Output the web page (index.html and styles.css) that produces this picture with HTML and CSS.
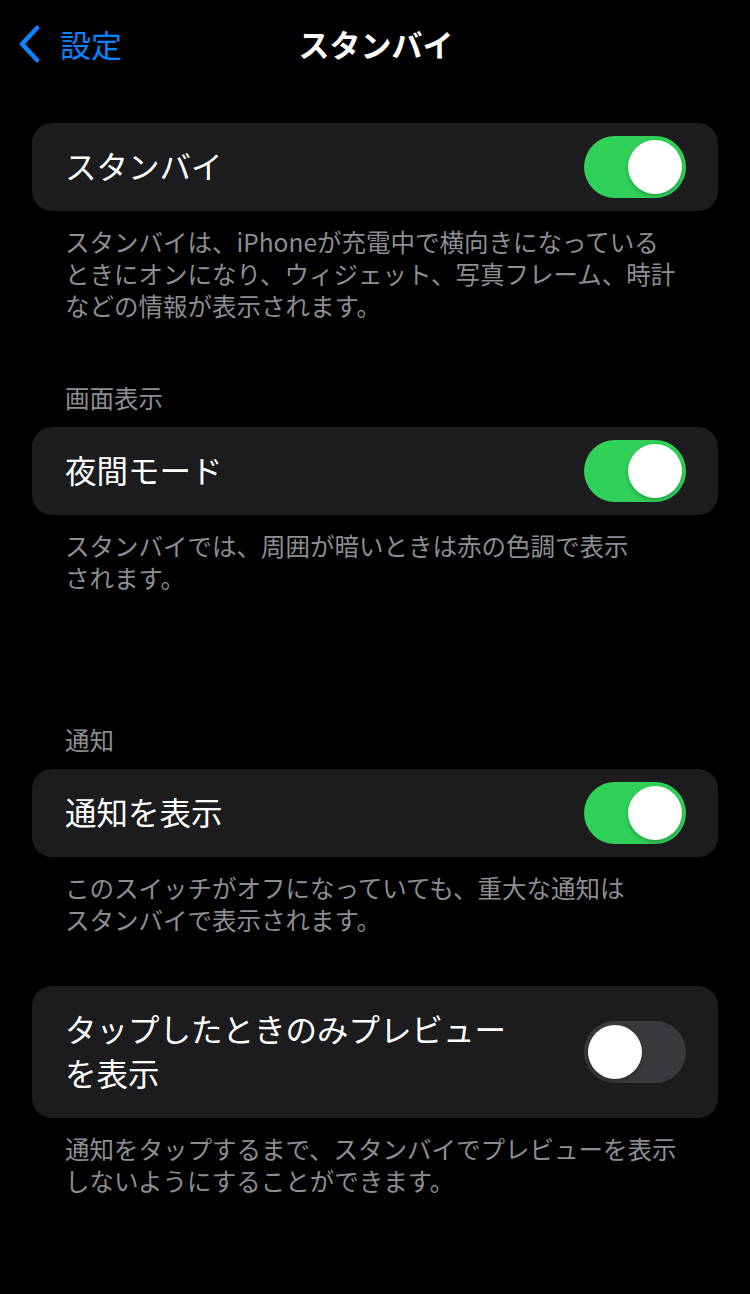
FILE: index.html
```html
<!DOCTYPE html>
<html lang="ja">

<head>
  <meta charset="UTF-8" />
  <meta name="viewport" content="width=device-width, initial-scale=1.0" />
  <title>スタンバイ</title>

  <link rel="stylesheet" href="styles.css">
</head>

<body>
  <div id="app">
    <header class="nav">
      <a class="nav-back" href="#">
        <svg class="chevron" width="24" height="38" viewBox="0 0 24 38">
          <path d="M19 3 L4 19 L19 35" fill="none" stroke="#0a84ff" stroke-width="4.5" stroke-linecap="round" stroke-linejoin="round" />
        </svg>
        <span>設定</span>
      </a>
      <h1 class="nav-title">スタンバイ</h1>
      <div></div>
    </header>

    <main class="list">
      <section class="group">
        <div class="card">
          <div class="row">
            <span class="label">スタンバイ</span>
            <span class="switch on"><span class="knob"></span></span>
          </div>
        </div>
        <p class="note">スタンバイは、iPhoneが充電中で横向きになっている<br>ときにオンになり、ウィジェット、写真フレーム、時計<br>などの情報が表示されます。</p>
      </section>

      <section class="group gap-md">
        <h2 class="group-title">画面表示</h2>
        <div class="card">
          <div class="row">
            <span class="label">夜間モード</span>
            <span class="switch on"><span class="knob"></span></span>
          </div>
        </div>
        <p class="note">スタンバイでは、周囲が暗いときは赤の色調で表示<br>されます。</p>
      </section>

      <section class="group gap-lg">
        <h2 class="group-title">通知</h2>
        <div class="card">
          <div class="row">
            <span class="label">通知を表示</span>
            <span class="switch on"><span class="knob"></span></span>
          </div>
        </div>
        <p class="note">このスイッチがオフになっていても、重大な通知は<br>スタンバイで表示されます。</p>
      </section>

      <section class="group gap-sm">
        <div class="card">
          <div class="row">
            <span class="label">タップしたときのみプレビュー<br>を表示</span>
            <span class="switch"><span class="knob"></span></span>
          </div>
        </div>
        <p class="note">通知をタップするまで、スタンバイでプレビューを表示<br>しないようにすることができます。</p>
      </section>
    </main>
  </div>
</body>

</html>
```

FILE: styles.css
```css
* {
  box-sizing: border-box;
}

body {
  margin: 0;
  background-color: #000;
  color: #fff;
  font-family: "Noto Sans CJK JP", "Noto Sans", sans-serif;
}

#app {
  width: 750px;
  min-height: 1294px;
}

.nav {
  height: 88px;
  display: grid;
  grid-template-columns: 1fr auto 1fr;
  align-items: center;
  padding: 0 16px 0 18px;
}

.nav-back {
  display: flex;
  align-items: center;
  gap: 18px;
  color: #0a84ff;
  text-decoration: none;
  font-size: 31px;
  line-height: 40px;
}

.chevron {
  display: block;
}

.nav-title {
  margin: 0;
  font-size: 31px;
  font-weight: 700;
  line-height: 40px;
}

.list {
  padding: 35px 32px 40px;
}

.gap-sm {
  margin-top: 50px;
}

.gap-md {
  margin-top: 60px;
}

.gap-lg {
  margin-top: 130px;
}

.group-title {
  margin: 0;
  padding: 0 33px 13px;
  font-size: 24.5px;
  font-weight: 400;
  line-height: 32px;
  color: #8d8d93;
}

.card {
  background-color: #1c1c1e;
  border-radius: 20px;
}

.row {
  display: flex;
  align-items: center;
  justify-content: space-between;
  padding: 0 32px 0 33px;
}

.label {
  padding: 20px 0 24px;
  font-size: 31.5px;
  line-height: 44px;
  white-space: nowrap;
}

.switch {
  flex: none;
  width: 102px;
  height: 62px;
  border-radius: 31px;
  background-color: #39393d;
  padding: 4px;
  display: flex;
  justify-content: flex-start;
}

.switch.on {
  background-color: #30d158;
  justify-content: flex-end;
}

.knob {
  width: 54px;
  height: 54px;
  border-radius: 50%;
  background-color: #fff;
  box-shadow: 0 2px 4px rgba(0, 0, 0, 0.25);
}

.note {
  margin: 0;
  padding: 15px 33px 0;
  font-size: 24.5px;
  line-height: 32px;
  color: #8d8d93;
  white-space: nowrap;
}
```
